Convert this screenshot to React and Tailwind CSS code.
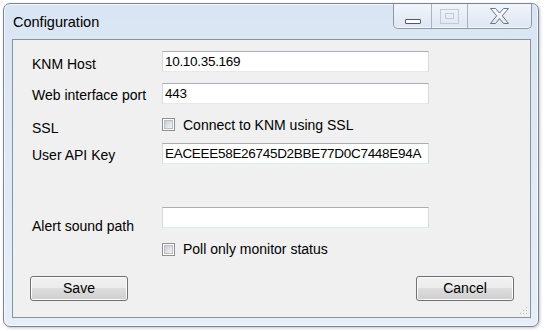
import React from 'react';

function Field({ value }) {
  return (
    <div className="w-[267px] h-[21px] bg-white border border-[#abadb3] border-x-[#d5d9e0] border-b-[#e3e9ef] pl-[2px] text-[13.5px] leading-[20px] tracking-[-0.3px] whitespace-nowrap overflow-hidden">
      {value}
    </div>
  );
}

function Check() {
  return (
    <div className="w-[13px] h-[13px] shrink-0 border border-[#8e8f8f] bg-white p-[1px]">
      <div className="w-full h-full border border-[#b9bec4] bg-gradient-to-br from-[#c7ccd2] to-[#f6f6f6]" />
    </div>
  );
}

function Button({ children }) {
  return (
    <button className="w-[98px] h-[25px] rounded-[3px] border border-[#707070] bg-[linear-gradient(to_bottom,#f2f2f2_0%,#ebebeb_50%,#dddddd_50%,#cfcfcf_100%)] shadow-[inset_0_0_0_1px_#fcfcfc] text-[14px] leading-[23px] text-black">
      {children}
    </button>
  );
}

function CaptionButtons() {
  return (
    <div className="mr-[6px] h-[25px] flex border-x border-b border-[#8d98a5] rounded-b-[5px] bg-gradient-to-b from-[#f1f5fb] to-[#dde7f3] shadow-[inset_0_-1px_0_rgba(255,255,255,0.7)]">
      {/* minimize */}
      <div className="w-[37px] h-full flex items-end justify-center pb-[4px]">
        <div className="w-[16px] h-[5px] border border-[#4f5a67] rounded-[1px] bg-white" />
      </div>
      <div className="w-px h-full bg-[#a9b4c1]" />
      {/* maximize (disabled) */}
      <div className="w-[35px] h-full flex items-center justify-center">
        <div className="w-[19px] h-[15px] border border-[#c3cad3] flex items-center justify-center">
          <div className="w-[9px] h-[6px] border border-[#c3cad3]" />
        </div>
      </div>
      <div className="w-px h-full bg-[#a9b4c1]" />
      {/* close */}
      <div className="w-[63px] h-full flex items-center justify-center">
        <svg width="21" height="18" viewBox="0 0 21 18">
          <defs>
            <linearGradient id="xg" x1="0" y1="0" x2="0" y2="1">
              <stop offset="0" stopColor="#ffffff" />
              <stop offset="1" stopColor="#e3e8ee" />
            </linearGradient>
          </defs>
          <polygon
            points="1.5,1.5 6.5,1.5 10.5,6 14.5,1.5 19.5,1.5 13.3,8.8 19.5,16.5 14.5,16.5 10.5,11.6 6.5,16.5 1.5,16.5 7.7,8.8"
            fill="url(#xg)"
            stroke="#6b7583"
            strokeWidth="1"
            strokeLinejoin="round"
          />
        </svg>
      </div>
    </div>
  );
}

export default function App() {
  return (
    <div className="w-[546px] h-[332px] bg-white pt-[3px] pl-[3px] font-['Liberation_Sans',Arial,sans-serif] text-black">
      <div className="w-[536px] h-[324px] flex flex-col border border-[#7a8694] rounded-[7px] bg-gradient-to-b from-[#dae5f3] to-[#e5eef9] shadow-[inset_0_0_0_1px_rgba(255,255,255,0.65),1px_1px_3px_rgba(0,0,0,0.25)]">
        {/* Title bar */}
        <div className="h-[35px] flex items-start justify-between">
          <div className="pt-[10px] pl-[9px] text-[14.5px] leading-[16px]">Configuration</div>
          <CaptionButtons />
        </div>

        {/* Client area */}
        <div className="relative ml-[8px] mr-[7px] h-[279px] border border-[#8a939d] bg-[#f0f0f0] pl-[19px] pt-[11px] flex flex-col text-[14px] leading-[16px]">
          <div className="h-[21px] flex items-start">
            <div className="w-[130px] pt-[5px]">KNM Host</div>
            <Field value="10.10.35.169" />
          </div>

          <div className="mt-[11px] h-[21px] flex items-start">
            <div className="w-[130px] pt-[4px]">Web interface port</div>
            <Field value="443" />
          </div>

          <div className="mt-[13px] h-[16px] flex items-start">
            <div className="w-[130px] pt-[3px]">SSL</div>
            <div className="flex items-start">
              <div className="mt-[1px]">
                <Check />
              </div>
              <span className="ml-[8px]">Connect to KNM using SSL</span>
            </div>
          </div>

          <div className="mt-[10px] h-[21px] flex items-start">
            <div className="w-[130px] pt-[4px]">User API Key</div>
            <Field value="EACEEE58E26745D2BBE77D0C7448E94A" />
          </div>

          <div className="mt-[43px] h-[21px] flex items-start">
            <div className="w-[130px] pt-[11px]">Alert sound path</div>
            <Field value="" />
          </div>

          <div className="mt-[13px] h-[16px] flex items-start">
            <div className="w-[130px]" />
            <div className="mt-[2px]">
              <Check />
            </div>
            <span className="ml-[8px]">Poll only monitor status</span>
          </div>

          <div className="mt-[19px] -ml-[2px] w-[484px] flex justify-between">
            <Button>Save</Button>
            <Button>Cancel</Button>
          </div>

          {/* resize grip */}
          <svg className="absolute right-[2px] bottom-[2px]" width="9" height="9" viewBox="0 0 9 9">
            <rect x="7" y="1" width="1" height="1" fill="#b8bec6" />
            <rect x="4" y="4" width="1" height="1" fill="#b8bec6" />
            <rect x="7" y="4" width="1" height="1" fill="#b8bec6" />
            <rect x="1" y="7" width="1" height="1" fill="#b8bec6" />
            <rect x="4" y="7" width="1" height="1" fill="#b8bec6" />
            <rect x="7" y="7" width="1" height="1" fill="#b8bec6" />
          </svg>
        </div>
      </div>
    </div>
  );
}
